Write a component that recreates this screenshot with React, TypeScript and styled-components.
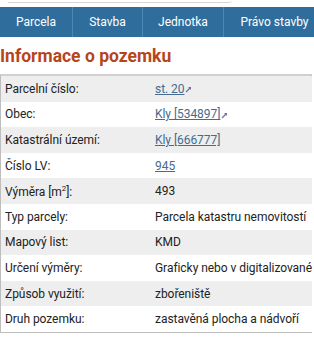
import styled, { createGlobalStyle } from 'styled-components';

const Global = createGlobalStyle`
    body {
        margin: 0;
        background: #fff;
        font-family: Roboto, 'Liberation Sans', sans-serif;
        color: #222;
        overflow: hidden;
    }
`;

const Page = styled.div`
    width: 314px;
    height: 340px;
    overflow: hidden;
`;

const SearchEdge = styled.div`
    width: 224px;
    height: 2px;
    margin-left: 8px;
    border-bottom: 1px solid #d6d6d6;
    border-bottom-right-radius: 4px;
`;

const Nav = styled.nav`
    display: flex;
    margin-top: 4px;
    height: 30px;
    background: #2f6d9c;
    white-space: nowrap;
`;

const Tab = styled.a<{ w: number }>`
    flex: 0 0 ${(p) => p.w}px;
    display: flex;
    align-items: center;
    justify-content: center;
    color: #fff;
    font-size: 12px;
    border-right: 1px solid #4b87b3;
    text-decoration: none;
`;

const Title = styled.h2`
    margin: 8px 0 0 0;
    font-size: 17.5px;
    line-height: 22px;
    font-weight: 700;
    color: #b5461a;
`;

const Table = styled.div`
    margin-top: 7px;
    width: 310px;
    display: grid;
    grid-template-columns: 150px 1fr;
    border: 1px solid #bdbdbd;
    border-top: 2px solid #d0d0d0;
`;

const Cell = styled.div<{ alt: boolean }>`
    height: 25.6px;
    display: flex;
    align-items: center;
    padding-left: 4px;
    font-size: 12px;
    letter-spacing: -0.05px;
    background: ${(p) => (p.alt ? '#eeeeee' : '#ffffff')};
    white-space: nowrap;
`;

const ValueLink = styled.a`
    color: #456b90;
    text-decoration: underline;
    display: inline-flex;
    align-items: center;
`;

const Ext = () => (
    <svg width="7" height="7" viewBox="0 0 7 7" style={{ marginLeft: 1, marginTop: 2 }}>
        <path d="M1 6 L5.5 1.5" stroke="#7b6aa8" strokeWidth="1.3" />
        <path d="M3 1 L6 1 L6 4 Z" fill="#7b6aa8" />
    </svg>
);

type Row = { label: React.ReactNode; value: string; link?: boolean; ext?: boolean };

const rows: Row[] = [
    { label: 'Parcelní číslo:', value: 'st. 20', link: true, ext: true },
    { label: 'Obec:', value: 'Kly [534897]', link: true, ext: true },
    { label: 'Katastrální území:', value: 'Kly [666777]', link: true },
    { label: 'Číslo LV:', value: '945', link: true },
    {
        label: (
            <span>
                Výměra [m<sup style={{ fontSize: 8 }}>2</sup>]:
            </span>
        ),
        value: '493',
    },
    { label: 'Typ parcely:', value: 'Parcela katastru nemovitostí' },
    { label: 'Mapový list:', value: 'KMD' },
    { label: 'Určení výměry:', value: 'Graficky nebo v digitalizované' },
    { label: 'Způsob využití:', value: 'zbořeniště' },
    { label: 'Druh pozemku:', value: 'zastavěná plocha a nádvoří' },
];

const tabs: [string, number][] = [
    ['Parcela', 72],
    ['Stavba', 69],
    ['Jednotka', 80],
    ['Právo stavby', 101],
];

export default function App() {
    return (
        <Page>
            <Global />
            <SearchEdge />
            <Nav>
                {tabs.map(([t, w]) => (
                    <Tab key={t} w={w}>
                        {t}
                    </Tab>
                ))}
            </Nav>
            <Title>Informace o pozemku</Title>
            <Table>
                {rows.map((r, i) => (
                    <>
                        <Cell alt={i % 2 === 0} key={'l' + i}>
                            {r.label}
                        </Cell>
                        <Cell alt={i % 2 === 0} key={'v' + i}>
                            {r.link ? (
                                <ValueLink>
                                    {r.value}
                                    {r.ext && <Ext />}
                                </ValueLink>
                            ) : (
                                r.value
                            )}
                        </Cell>
                    </>
                ))}
            </Table>
        </Page>
    );
}
